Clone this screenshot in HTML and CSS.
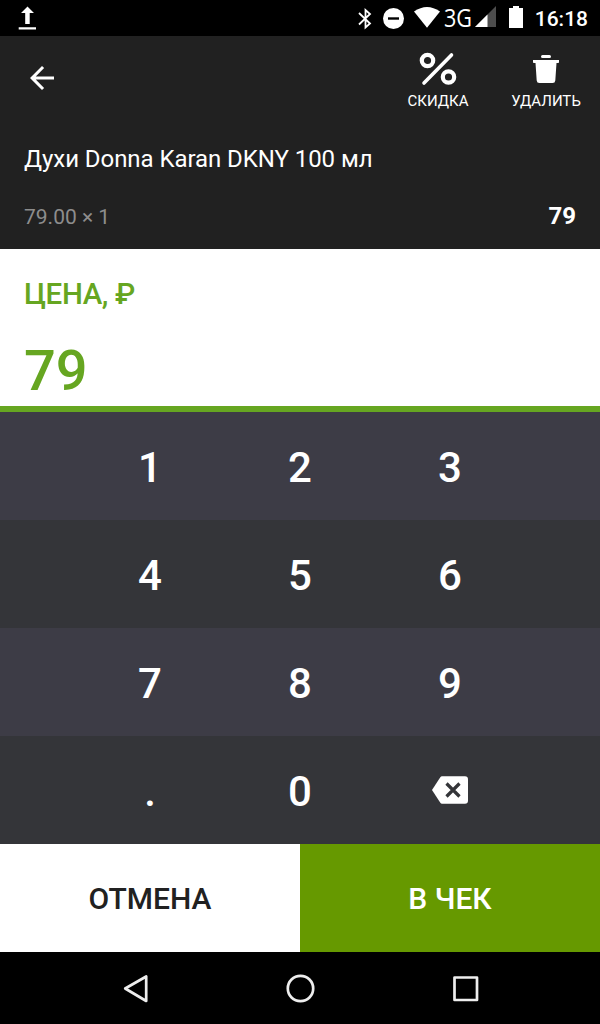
FILE: index.html
```
<!DOCTYPE html>
<html lang="ru">
<head>
    <meta charset="UTF-8">
    <meta name="viewport" content="width=device-width, initial-scale=1.0">
    <title>Цена товара</title>
    <link rel="stylesheet" href="styles.css">
</head>
<body>
    <div class="status-bar">
        <svg width="20" height="36" viewBox="0 0 20 36" fill="#fff">
            <path d="M9.500 6.500l6.500 6.500h-4.300v11H7.200V13H3zM.7 27.200h17.300v2.300H.7z"/>
        </svg>
        <div class="status-icons">
            <svg class="bluetooth" width="14" height="36" viewBox="0 0 14 36" fill="none" stroke="#fff" stroke-width="1.800">
                <path d="M1 13l11 10.500-4.500 4V10l4.500 4L1 24.500"/>
            </svg>
            <svg class="silent" width="21" height="36" viewBox="0 0 21 36">
                <circle cx="10.500" cy="18.500" r="10.500" fill="#fff"/>
                <path d="M5 17.300h11v2.400H5z" fill="#000"/>
            </svg>
            <svg class="wifi" width="26" height="36" viewBox="0 0 26 36">
                <path d="M0 11.500Q13 2.500 26 11.500L13 27.800z" fill="#fff"/>
            </svg>
            <span class="network">3G</span>
            <svg class="signal" width="22" height="36" viewBox="0 0 22 36">
                <path d="M0 27L21 6v21z" fill="#4d4d4d"/>
                <path d="M0 27l12.500-12.500V27z" fill="#fff"/>
            </svg>
            <svg class="battery" width="14" height="36" viewBox="0 0 14 36">
                <path d="M4 6h6v2h4v20H0V8h4z" fill="#fff"/>
            </svg>
            <span class="clock">16:18</span>
        </div>
    </div>

    <header>
        <div class="toolbar">
            <button class="back" aria-label="Назад">
                <svg width="36" height="36" viewBox="0 0 24 24"><path d="M20 11H7.830l5.590-5.590L12 4l-8 8 8 8 1.410-1.410L7.830 13H20z" fill="#fff"/></svg>
            </button>
            <button class="action discount">
                <svg width="38" height="34" viewBox="0 0 38 34" fill="none" stroke="#fff">
                    <circle cx="8.500" cy="8.500" r="5.700" stroke-width="4.200"/>
                    <circle cx="29.500" cy="25" r="5.700" stroke-width="4.200"/>
                    <path d="M5 31L32.500 3" stroke-width="3.600" stroke-linecap="round"/>
                </svg>
                <span>СКИДКА</span>
            </button>
            <button class="action remove">
                <svg width="38" height="34" viewBox="0 0 38 34" fill="#fff">
                    <rect x="14" y="3" width="10" height="3" rx="1.500"/>
                    <path d="M6 8h26v2.200q0 .8-.8 .8h-1.700l-1.200 17.500q-.2 2.500-2.700 2.500H12.400q-2.500 0-2.700-2.500L8.500 11H6.800q-.8 0-.8-.8z"/>
                </svg>
                <span>УДАЛИТЬ</span>
            </button>
        </div>
        <h1>Духи Donna Karan DKNY 100 мл</h1>
        <div class="summary">
            <span>79.00 × 1</span>
            <strong>79</strong>
        </div>
    </header>

    <main>
        <section class="price">
            <div class="label">ЦЕНА, ₽</div>
            <div class="value">79</div>
        </section>

        <section class="keypad">
            <div class="row">
                <button>1</button>
                <button>2</button>
                <button>3</button>
            </div>
            <div class="row">
                <button>4</button>
                <button>5</button>
                <button>6</button>
            </div>
            <div class="row">
                <button>7</button>
                <button>8</button>
                <button>9</button>
            </div>
            <div class="row">
                <button>.</button>
                <button>0</button>
                <button class="erase" aria-label="Стереть">
                    <svg width="36" height="28" viewBox="0 0 36 28">
                        <path d="M10 .3h23q3 0 3 3v21.400q0 3-3 3H10q-1 0-1.700-1L0 14 8.300 1.300Q9 .3 10 .3z" fill="#fff"/>
                        <path d="M14.500 7.500l13 13m0-13l-13 13" stroke="#343539" stroke-width="3.200"/>
                    </svg>
                </button>
            </div>
        </section>

        <div class="buttons">
            <button class="cancel">ОТМЕНА</button>
            <button class="submit">В ЧЕК</button>
        </div>
    </main>

    <!-- системная навигация -->
    <nav>
        <svg width="36" height="36" viewBox="0 0 36 36"><path d="M7.500 18.500L28.500 6.500v24.500z" transform="translate(.7)"/></svg>
        <svg width="36" height="36" viewBox="0 0 36 36"><circle cx="18.500" cy="18.500" r="12.700"/></svg>
        <svg width="36" height="36" viewBox="0 0 36 36"><path d="M7.500 7.500h22.500v22.500H7.500z"/></svg>
    </nav>
</body>
</html>
```

FILE: styles.css
```
* {
    box-sizing: border-box;
}

body {
    margin: 0;
    font-family: Roboto, sans-serif;
    background: #000;
    color: #fff;
}

svg {
    display: block;
    flex-shrink: 0;
}

button {
    display: flex;
    align-items: center;
    justify-content: center;
    padding: 0;
    border: none;
    background: none;
    color: inherit;
    font-family: inherit;
    cursor: pointer;
}

.status-bar {
    display: flex;
    justify-content: space-between;
    height: 36px;
    padding: 0 12px 0 18px;
}

.status-icons {
    display: flex;
    line-height: 36px;
}

.silent {
    margin-left: 11px;
}

.wifi {
    margin-left: 10px;
}

.network {
    width: 27px;
    margin: 0 4px;
    font-family: "Open Sans", sans-serif;
    font-size: 26px;
    line-height: 34px;
    transform: scaleX(0.83);
    transform-origin: left;
}

.battery {
    margin-left: 12px;
}

.clock {
    width: 54px;
    margin-left: 11px;
    font-size: 21px;
    font-weight: 500;
    line-height: 38px;
    text-align: right;
}

header {
    height: 213px;
    padding: 0 24px;
    background: #212121;
}

.toolbar {
    display: flex;
    height: 84px;
    margin-right: -24px;
}

.back {
    margin-right: auto;
}

.action {
    flex-direction: column;
    justify-content: flex-start;
    width: 108px;
    padding-top: 16px;
    font-size: 15px;
}

.action span {
    margin-top: 6px;
    line-height: 18px;
}

h1 {
    margin: 23px 0 0;
    font-size: 24px;
    font-weight: 400;
    line-height: 32px;
    letter-spacing: -0.06px;
}

.summary {
    display: flex;
    justify-content: space-between;
    margin-top: 25px;
    line-height: 32px;
    font-size: 21px;
    color: #8d8d8d;
}

.summary span {
    line-height: 34px;
}

.summary strong {
    font-size: 24px;
    color: #fff;
}

.price {
    height: 163px;
    padding: 25px 24px 0;
    border-bottom: 6px solid #66a621;
    background: #fff;
    color: #66a621;
    font-weight: 500;
}

.label {
    font-size: 29.5px;
    line-height: 40px;
    letter-spacing: -0.4px;
}

.value {
    margin-top: 25px;
    font-size: 56px;
    line-height: 64px;
}

.row {
    display: flex;
    justify-content: center;
    height: 108px;
    background: #3d3c46;
}

.row:nth-child(even) {
    background: #343539;
}

.row button {
    width: 150px;
    padding-top: 2px;
    font-size: 42px;
    font-weight: 500;
}

.row .erase {
    padding-top: 0;
}

.buttons {
    display: flex;
    height: 108px;
}

.buttons button {
    flex: 1;
    font-size: 30px;
    font-weight: 500;
}

.cancel {
    background: #fff;
    color: #212121;
}

.submit {
    background: #669900;
}

nav {
    display: flex;
    justify-content: center;
    align-items: center;
    gap: 129px;
    height: 72px;
}

nav svg {
    fill: none;
    stroke: #eee;
    stroke-width: 2.7;
    stroke-linejoin: round;
}
```
